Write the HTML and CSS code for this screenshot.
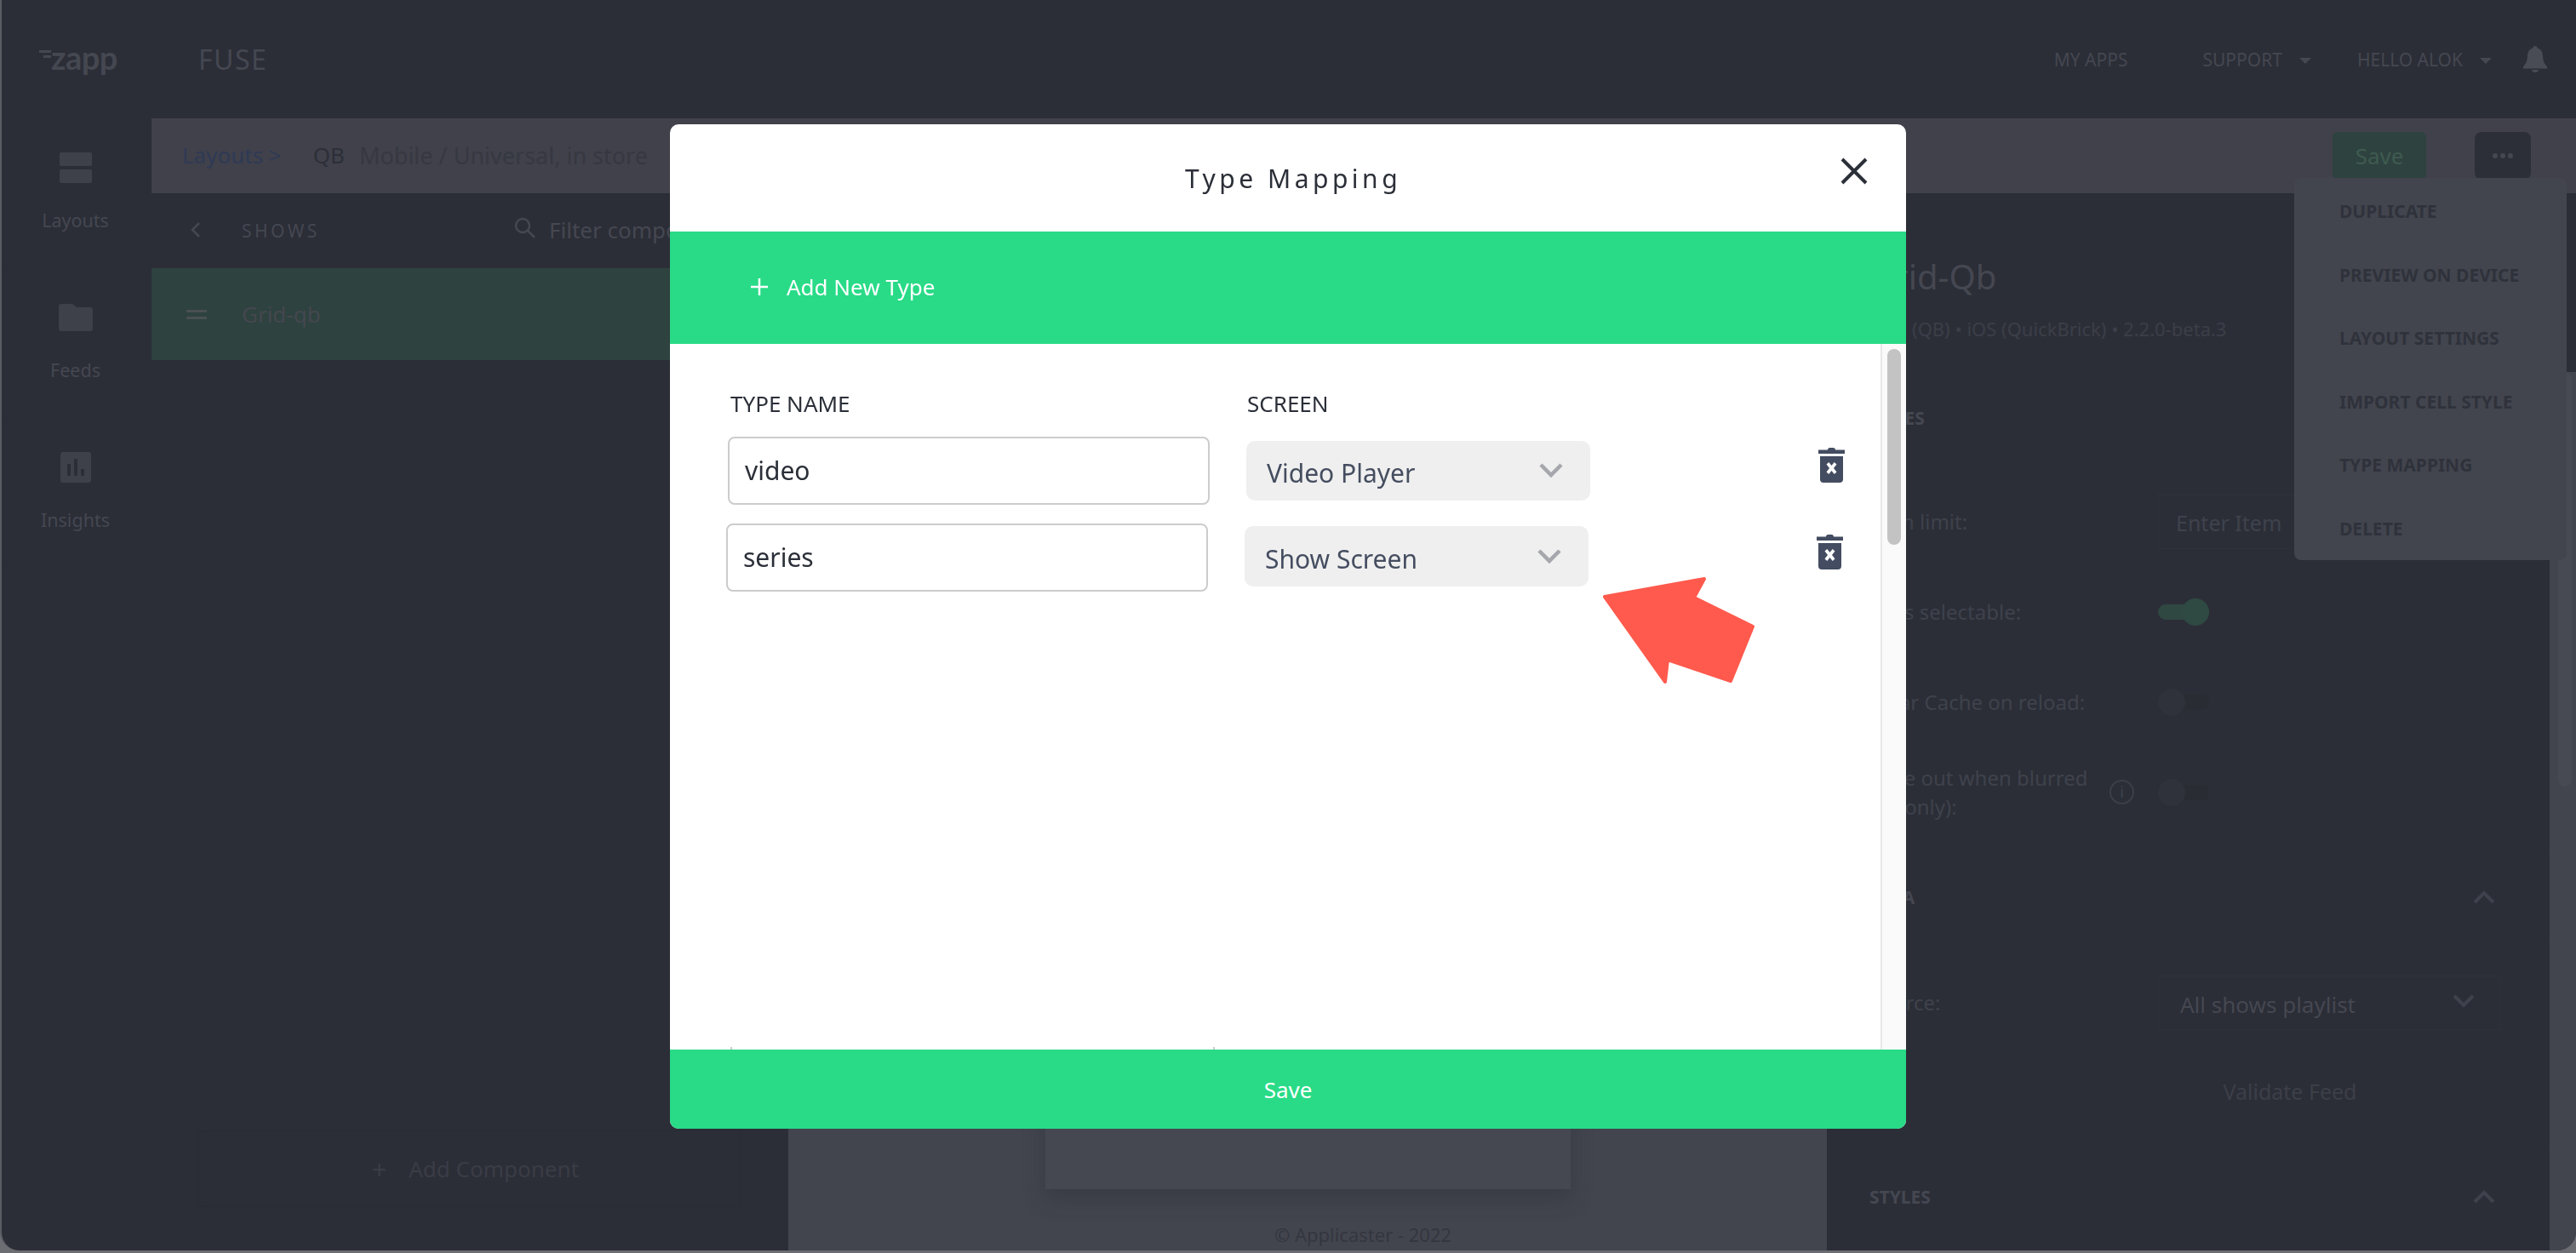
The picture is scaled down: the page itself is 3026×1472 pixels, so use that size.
FILE: index.html
```html
<!DOCTYPE html>
<html lang="en">
<head>
    <meta charset="UTF-8">
    <meta name="viewport" content="width=device-width, initial-scale=1.0">
    <title>Fuse - Type Mapping</title>
    <link rel="stylesheet" href="styles.css">
</head>
<body>
    <div class="window">
        <header class="topbar">
            <div class="logo">
                <svg class="logo-marks" width="14" height="12" viewBox="0 0 14 12"><rect x="0" y="1" width="14" height="3"/><rect x="5" y="7" width="9" height="3"/></svg>
                <span>zapp</span>
            </div>
            <div class="product">FUSE</div>
            <nav class="topnav">
                <span class="nav-apps">MY APPS</span>
                <span class="nav-support">SUPPORT<i class="caret"></i></span>
                <span class="nav-user">HELLO ALOK<i class="caret"></i></span>
                <svg class="bell" width="28" height="31" viewBox="0 0 28 31"><path d="M14 0c1.600 0 2.500 1 2.500 2.600 4.700 1.200 6.500 5 6.500 9.400 0 5 1.500 8.500 5 12.500v2H0v-2c3.500-4 5-7.500 5-12.500 0-4.400 1.800-8.200 6.500-9.400C11.500 1 12.400 0 14 0z"/><path d="M10 28h8a4 3 0 0 1-8 0z"/></svg>
            </nav>
        </header>

        <div class="workspace">
            <aside class="sidebar">
                <div class="side-item">
                    <div class="side-icon">
                        <svg width="38" height="36" viewBox="0 0 38 36"><rect width="38" height="16" rx="2"/><rect y="20" width="38" height="16" rx="2"/></svg>
                    </div>
                    <span>Layouts</span>
                </div>
                <div class="side-item">
                    <div class="side-icon">
                        <svg width="40" height="32" viewBox="0 0 40 32"><path d="M3 0h13l5 4h16a3 3 0 0 1 3 3v22a3 3 0 0 1-3 3H3a3 3 0 0 1-3-3V3a3 3 0 0 1 3-3z"/></svg>
                    </div>
                    <span>Feeds</span>
                </div>
                <div class="side-item">
                    <div class="side-icon">
                        <svg width="36" height="36" viewBox="0 0 36 36"><path fill-rule="evenodd" d="M3 0h30a3 3 0 0 1 3 3v30a3 3 0 0 1-3 3H3a3 3 0 0 1-3-3V3a3 3 0 0 1 3-3zm5 14v14h4V14zm8-6v20h4V8zm8 12v8h4v-8z"/></svg>
                    </div>
                    <span>Insights</span>
                </div>
            </aside>

            <div class="editor">
                <div class="subbar">
                    <a class="crumb">Layouts &gt;</a>
                    <span class="crumb-name">QB</span>
                    <span class="crumb-meta">Mobile / Universal, in store</span>
                    <div class="subbar-actions">
                        <button class="btn-save">Save</button>
                        <button class="btn-more"><i></i><i></i><i></i></button>
                    </div>
                    <ul class="more-menu">
                        <li>DUPLICATE</li>
                        <li>PREVIEW ON DEVICE</li>
                        <li>LAYOUT SETTINGS</li>
                        <li>IMPORT CELL STYLE</li>
                        <li>TYPE MAPPING</li>
                        <li>DELETE</li>
                    </ul>
                </div>

                <div class="panels">
                    <section class="components">
                        <div class="components-head">
                            <svg class="back" width="12" height="20" viewBox="0 0 12 20"><path d="M10 2l-8 8 8 8"/></svg>
                            <span class="shows">SHOWS</span>
                            <svg class="search" width="25" height="25" viewBox="0 0 25 25"><circle cx="10" cy="10" r="8"/><path d="M16 16l8 8"/></svg>
                            <span class="filter">Filter components</span>
                        </div>
                        <div class="component-row">
                            <span class="drag"><i></i><i></i></span>
                            <span>Grid-qb</span>
                        </div>
                        <button class="add-component"><b>+</b>Add Component</button>
                    </section>

                    <section class="canvas">
                        <div class="preview"></div>
                        <div class="copyright">© Applicaster - 2022</div>
                    </section>

                    <section class="props">
                        <div class="props-head">
                            <h2>Grid-Qb</h2>
                            <p>Grid (QB) • iOS (QuickBrick) • 2.2.0-beta.3</p>
                        </div>
                        <div class="props-scroll">
                            <div class="props-body">
                                <div class="group-title group-rules">RULES</div>
                                <div class="field field-limit"><label>Item limit:</label><div class="fake-input">Enter Item</div></div>
                                <div class="field"><label>Cells selectable:</label><span class="toggle on"></span></div>
                                <div class="field"><label>Clear Cache on reload:</label><span class="toggle"></span></div>
                                <div class="field field-fade">
                                    <label>Fade out when blurred<br>(TV only):</label>
                                    <span class="info">i</span>
                                    <span class="toggle"></span>
                                </div>
                                <div class="group-title group-data">DATA
                                    <svg class="up" width="26" height="16" viewBox="0 0 26 16"><path d="M2 14L13 3l11 11"/></svg>
                                </div>
                                <div class="field field-source">
                                    <label>Source:</label>
                                    <div class="fake-select">All shows playlist
                                        <svg width="26" height="16" viewBox="0 0 26 16"><path d="M2 2l11 11L24 2"/></svg>
                                    </div>
                                </div>
                                <button class="validate">Validate Feed</button>
                                <div class="group-title group-styles">STYLES
                                    <svg class="up" width="26" height="16" viewBox="0 0 26 16"><path d="M2 14L13 3l11 11"/></svg>
                                </div>
                            </div>
                            <div class="props-track"><div class="props-thumb"></div></div>
                        </div>
                    </section>
                </div>
            </div>
        </div>
    </div>

    <!-- Type mapping popup -->
    <div class="modal">
        <div class="modal-head">
            <h1>Type Mapping</h1>
            <svg class="modal-close" width="32" height="32" viewBox="0 0 32 32"><path d="M2 2l28 28M30 2L2 30"/></svg>
        </div>
        <div class="modal-add">
            <svg width="20" height="20" viewBox="0 0 20 20"><path d="M10 0v20M0 10h20"/></svg>
            <span>Add New Type</span>
        </div>
        <div class="modal-body">
            <div class="type-list">
                <div class="type-labels">
                    <span>TYPE NAME</span>
                    <span>SCREEN</span>
                </div>
                <div class="type-row">
                    <div class="type-input">video</div>
                    <div class="type-select">Video Player
                        <svg width="28" height="18" viewBox="0 0 28 18"><path d="M2 2l12 12L26 2"/></svg>
                    </div>
                    <svg class="trash" width="31" height="41" viewBox="0 0 31 41"><path d="M11 2.500c0-1.400 1-2.500 2.500-2.500h4c1.500 0 2.500 1.100 2.500 2.500H31V7H0V2.500z"/><path fill-rule="evenodd" d="M2 10h27v27a4 4 0 0 1-4 4H6a4 4 0 0 1-4-4zm7.500 9.500l3.500 4.500-3.500 4.500 2.800 2.600 3.200-4 3.200 4 2.800-2.600-3.500-4.500 3.500-4.500-2.800-2.600-3.200 4-3.200-4z"/></svg>
                </div>
                <div class="type-row type-row-second">
                    <div class="type-input">series</div>
                    <div class="type-select">Show Screen
                        <svg width="28" height="18" viewBox="0 0 28 18"><path d="M2 2l12 12L26 2"/></svg>
                    </div>
                    <svg class="trash" width="31" height="41" viewBox="0 0 31 41"><path d="M11 2.500c0-1.400 1-2.500 2.500-2.500h4c1.500 0 2.500 1.100 2.500 2.500H31V7H0V2.500z"/><path fill-rule="evenodd" d="M2 10h27v27a4 4 0 0 1-4 4H6a4 4 0 0 1-4-4zm7.500 9.500l3.500 4.500-3.500 4.500 2.800 2.600 3.200-4 3.200 4 2.800-2.600-3.500-4.500 3.500-4.500-2.800-2.600-3.200 4-3.200-4z"/></svg>
                </div>
                <div class="type-row-cut"></div>
            </div>
            <div class="modal-track"><div class="modal-thumb"></div></div>
        </div>
        <div class="modal-save">Save</div>
        <svg class="pointer" width="190" height="135" viewBox="0 0 190 135"><path d="M4 25L121 4l-12 22 69 34-26 64-74-25-3 26z"/></svg>
    </div>
</body>
</html>
```

FILE: styles.css
```css
* {
    box-sizing: border-box;
}

html, body {
    margin: 0;
    height: 100%;
}

body {
    font-family: "Noto Sans", "Open Sans", sans-serif;
    background: #6c6d72;
    overflow: hidden;
}

button {
    font-family: inherit;
    padding: 0;
    background: none;
    border: none;
}

.window {
    width: 3026px;
    height: 1469px;
    border-left: 2px solid #5a5c63;
    border-bottom-left-radius: 22px;
    border-bottom-right-radius: 22px;
    background: #2b2e37;
    overflow: hidden;
    display: flex;
    flex-direction: column;
}

/* Top bar */
.topbar {
    height: 139px;
    flex: none;
    display: flex;
    align-items: center;
    color: #454751;
}

.logo {
    width: 231px;
    padding-left: 44px;
    display: flex;
    align-items: center;
    font-family: Lato, sans-serif;
    font-size: 38px;
    font-weight: 700;
    line-height: 1;
    letter-spacing: -0.5px;
    margin-top: -6px;
}

.logo-marks {
    fill: #454751;
    margin-top: -6px;
}

.product {
    font-size: 32px;
    letter-spacing: 1.500px;
}

.topnav {
    margin-left: auto;
    display: flex;
    align-items: center;
    font-size: 21px;
    color: #454751;
    padding-right: 34px;
}

.nav-apps {
    margin-right: 88px;
}

.nav-support {
    margin-right: 54px;
}

.nav-user {
    margin-right: 37px;
}

.caret {
    display: inline-block;
    margin-left: 20px;
    vertical-align: middle;
    border-left: 7px solid transparent;
    border-right: 7px solid transparent;
    border-top: 7px solid #454751;
}

.bell {
    fill: #4a4c55;
}

/* Page below top bar */
.workspace {
    flex: 1;
    display: flex;
    min-height: 0;
}

.sidebar {
    width: 176px;
    flex: none;
    color: #454751;
    font-size: 21.500px;
}

.side-item {
    height: 176px;
    padding: 38px 3px 0 0;
    display: flex;
    flex-direction: column;
    align-items: center;
    border-bottom: 1px solid #2a2d35;
}

.side-icon {
    height: 40px;
    display: flex;
    align-items: center;
    fill: #3e414a;
    margin-bottom: 27px;
}

.side-item span {
    line-height: 30px;
}

.editor {
    flex: 1;
    min-width: 0;
    display: flex;
    flex-direction: column;
}

.subbar {
    position: relative;
    height: 88px;
    flex: none;
    background: #40414b;
    display: flex;
    align-items: center;
    padding-left: 36px;
    font-size: 26px;
}

.crumb {
    color: #2f3a55;
    margin-right: 37px;
    margin-top: -2px;
}

.crumb-name {
    color: #2c2f38;
    margin-right: 17px;
    margin-top: -2px;
}

.crumb-meta {
    color: #363841;
    font-size: 27px;
    margin-top: -2px;
}

.subbar-actions {
    margin-left: auto;
    display: flex;
    padding-right: 53px;
}

.btn-save {
    width: 110px;
    height: 56px;
    border-radius: 6px;
    background: #2e423f;
    color: #3f5a50;
    font-size: 26px;
    margin-right: 57px;
}

.btn-more {
    width: 66px;
    height: 56px;
    border-radius: 8px;
    background: #2c2f38;
    display: flex;
    align-items: center;
    justify-content: center;
    gap: 3px;
}

.btn-more i {
    width: 6px;
    height: 6px;
    border-radius: 50%;
    background: #454751;
}

.more-menu {
    position: absolute;
    top: 70px;
    right: 11px;
    width: 320px;
    height: 449px;
    margin: 0;
    padding: 2px 0 0 53px;
    list-style: none;
    background: #42454e;
    border-radius: 8px;
    z-index: 2;
    font-size: 21px;
    font-weight: 700;
    color: #2f323b;
    display: flex;
    flex-direction: column;
    justify-content: space-around;
}

.panels {
    flex: 1;
    min-height: 0;
    display: flex;
}

/* Left component list */
.components {
    width: 748px;
    flex: none;
    display: flex;
    flex-direction: column;
    color: #454751;
}

.components-head {
    height: 88px;
    flex: none;
    display: flex;
    align-items: center;
    padding-left: 46px;
}

.back {
    fill: none;
    stroke: #454751;
    stroke-width: 2.500;
    margin-right: 48px;
    margin-top: -2px;
}

.shows {
    font-size: 21px;
    letter-spacing: 3.500px;
    width: 320px;
}

.search {
    fill: none;
    stroke: #454751;
    stroke-width: 2.500;
    margin-right: 16px;
    margin-top: -8px;
}

.filter {
    font-size: 26px;
    white-space: nowrap;
    margin-top: -2px;
}

.component-row {
    height: 108px;
    flex: none;
    background: #2e423f;
    display: flex;
    align-items: center;
    padding-left: 41px;
    font-size: 26px;
    color: #44474f;
}

.drag {
    width: 65px;
}

.drag i {
    display: block;
    width: 24px;
    height: 3px;
    margin: 5px 0;
    background: #4a5051;
}

.add-component {
    margin: auto 55px 51px 54px;
    height: 90px;
    flex: none;
    padding-left: 14px;
    border: 1px solid #292c34;
    border-radius: 6px;
    color: #3a3c46;
    font-size: 26px;
    display: flex;
    align-items: center;
    justify-content: center;
}

.add-component b {
    font-weight: 400;
    font-size: 30px;
    margin-right: 26px;
}

/* Middle canvas */
.canvas {
    width: 1220px;
    flex: none;
    background: #42454e;
    display: flex;
    flex-direction: column;
    align-items: center;
}

.preview {
    width: 617px;
    flex: 1;
    margin-left: 1px;
    background: #454851;
    box-shadow: 0 12px 22px rgba(40, 42, 48, 0.35);
}

.copyright {
    height: 72px;
    padding: 38px 0 0 130px;
    font-size: 22px;
    line-height: 30px;
    color: #34363f;
}

/* Right properties panel */
.props {
    flex: 1;
    min-width: 0;
    display: flex;
    flex-direction: column;
    color: #3f424c;
    font-size: 24px;
}

.props-head {
    height: 210px;
    flex: none;
    padding: 68px 0 0 50px;
}

.props-head h2 {
    margin: 0;
    font-size: 40px;
    font-weight: 400;
    line-height: 60px;
    color: #454751;
}

.props-head p {
    margin: 16px 0 0;
    font-size: 22px;
    line-height: 30px;
    color: #3c3e48;
    white-space: nowrap;
}

.props-scroll {
    flex: 1;
    min-height: 0;
    display: flex;
}

.props-body {
    flex: 1;
    min-width: 0;
    padding-left: 50px;
}

.props-track {
    width: 31px;
    flex: none;
    background: #42454e;
    padding-left: 10px;
}

.props-thumb {
    width: 16px;
    height: 487px;
    border-radius: 8px;
    background: #474a53;
}

.group-title {
    display: flex;
    align-items: center;
    justify-content: space-between;
    margin-left: -50px;
    padding: 0 64px 0 50px;
    font-size: 21px;
    font-weight: 700;
    border-bottom: 1px solid #2a2d35;
    color: #454751;
}

.group-rules {
    height: 109px;
}

.group-data {
    height: 106px;
    margin-top: 17px;
    border-top: 1px solid #2a2d35;
}

.group-styles {
    height: 112px;
    margin-top: 35px;
    border-top: 1px solid #2a2d35;
}

.up, .fake-select svg {
    fill: none;
    stroke: #3f424c;
    stroke-width: 4;
    flex: none;
}

.field {
    display: flex;
    align-items: center;
    height: 106px;
}

.field label {
    width: 339px;
    flex: none;
    line-height: 34px;
}

.field-limit {
    margin-top: 14px;
}

.fake-input {
    width: 400px;
    height: 64px;
    padding-left: 20px;
    line-height: 64px;
    border: 1px solid #2f323b;
    color: #3f424c;
    font-size: 25px;
}

.field-fade {
    position: relative;
}

.info {
    position: absolute;
    left: 282px;
    top: 38px;
    width: 29px;
    height: 29px;
    border: 2px solid #3c3f48;
    border-radius: 50%;
    font-size: 18px;
    line-height: 24px;
    text-align: center;
}

.toggle {
    position: relative;
    width: 60px;
    height: 18px;
    border-radius: 9px;
    background: #2a2c33;
}

.toggle::after {
    content: "";
    position: absolute;
    left: 0;
    top: -7px;
    width: 32px;
    height: 32px;
    border-radius: 50%;
    background: #2f323b;
}

.toggle.on {
    background: #2f4842;
}

.toggle.on::after {
    left: 28px;
    background: #2f4a43;
}

.field-source {
    height: 64px;
    margin-top: 39px;
}

.fake-select {
    width: 403px;
    height: 64px;
    padding: 4px 30px 0 25px;
    border: 1px solid #2f323b;
    display: flex;
    align-items: center;
    justify-content: space-between;
    font-size: 26px;
    color: #454751;
}

.fake-select svg {
    margin-top: -8px;
}

.validate {
    display: block;
    width: 272px;
    height: 67px;
    margin: 38px 0 0 358px;
    border: 1px solid #2a2d35;
    font-size: 25px;
    color: #3c3f48;
}

/* Popup */
.modal {
    position: fixed;
    left: 787px;
    top: 146px;
    width: 1452px;
    height: 1180px;
    background: #fff;
    border-radius: 10px;
    overflow: hidden;
    display: flex;
    flex-direction: column;
    z-index: 10;
}

.modal-head {
    position: relative;
    height: 126px;
    flex: none;
    display: flex;
    align-items: center;
    justify-content: center;
}

.modal-head h1 {
    margin: 0;
    padding-left: 12px;
    font-size: 30px;
    font-weight: 400;
    letter-spacing: 4.500px;
    color: #2b2f38;
}

.modal-close {
    position: absolute;
    left: 1375px;
    top: 39px;
    fill: none;
    stroke: #2b2f38;
    stroke-width: 4;
}

.modal-add {
    height: 132px;
    flex: none;
    background: #29db87;
    display: flex;
    align-items: center;
    padding: 0 0 2px 95px;
    color: #fff;
    font-size: 26px;
}

.modal-add svg {
    fill: none;
    stroke: #fff;
    stroke-width: 2.500;
    margin-right: 22px;
}

.modal-body {
    flex: 1;
    min-height: 0;
    display: flex;
}

.type-list {
    flex: 1;
    min-width: 0;
    padding: 53px 0 0 68px;
    overflow: hidden;
}

.type-labels {
    display: grid;
    grid-template-columns: 607px 1fr;
    padding-left: 3px;
    margin-bottom: 22px;
    font-size: 26px;
    line-height: 34px;
    color: #2b2f38;
}

.type-row {
    display: grid;
    grid-template-columns: 566px 404px 31px;
    column-gap: 43px;
    height: 78px;
}

.type-row .trash {
    margin-left: 225px;
    margin-top: 13px;
    fill: #434c60;
}

.type-row-second {
    margin-top: 24px;
    margin-left: -2px;
}

.type-input {
    border: 2px solid #ccc;
    border-radius: 8px;
    padding-left: 18px;
    line-height: 76px;
    font-size: 30px;
    color: #2b2f38;
}

.type-select {
    height: 70px;
    margin-top: 5px;
    border-radius: 10px;
    background: #efefef;
    padding: 5px 32px 0 24px;
    display: flex;
    align-items: center;
    justify-content: space-between;
    font-size: 30px;
    color: #454d60;
}

.type-row-second .type-select {
    margin-top: 3px;
    height: 71px;
}

.type-select svg {
    fill: none;
    stroke: #a6a7ad;
    stroke-width: 4.500;
    margin-top: -5px;
}

.type-row-cut {
    width: 569px;
    height: 4px;
    margin: 537px 0 0 3px;
    border-left: 2px solid #ccc;
    border-right: 2px solid #ccc;
}

.modal-track {
    width: 30px;
    flex: none;
    background: #fafafa;
    border-left: 2px solid #e8e8e8;
    padding: 6px 0 0 6px;
}

.modal-thumb {
    width: 16px;
    height: 230px;
    border-radius: 8px;
    background: #c3c3c3;
}

.modal-save {
    height: 93px;
    flex: none;
    background: #29db87;
    display: flex;
    align-items: center;
    justify-content: center;
    color: #fff;
    font-size: 26px;
}

.pointer {
    position: absolute;
    left: 1094px;
    top: 530px;
    fill: #ff5a4d;
    stroke: #ff5a4d;
    stroke-width: 4;
    stroke-linejoin: round;
}
```
